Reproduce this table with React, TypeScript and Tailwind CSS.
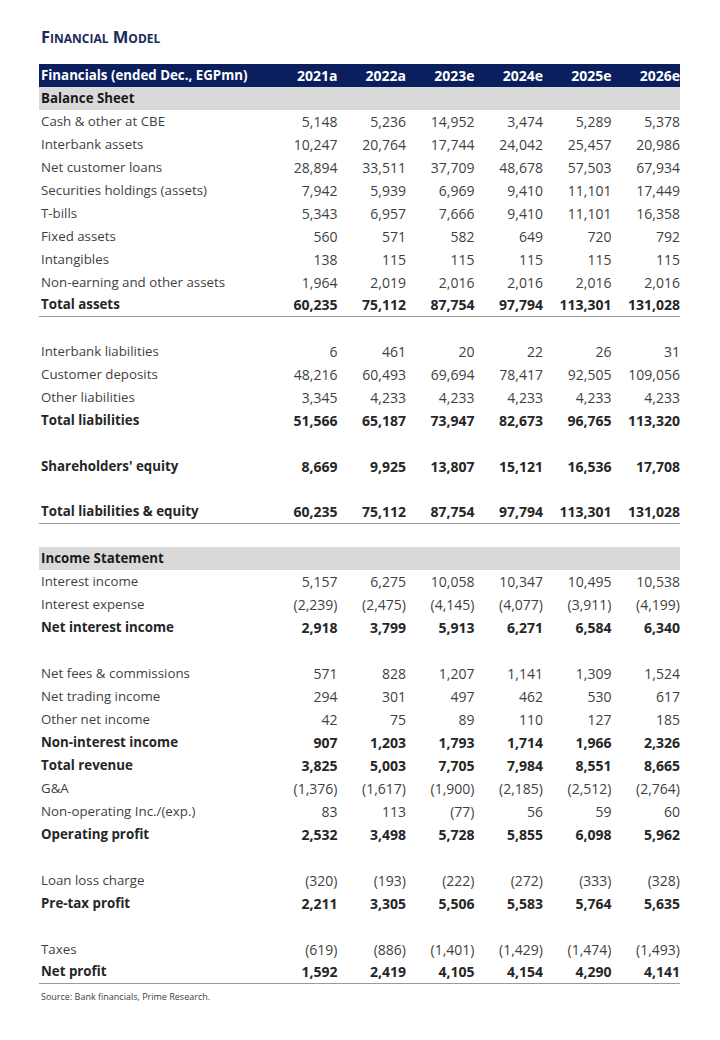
type Row =
  | { kind: 'section'; label: string }
  | { kind: 'blank' }
  | { kind: 'data'; label: string; values: string[]; bold?: boolean; line?: boolean }

const years = ['2021a', '2022a', '2023e', '2024e', '2025e', '2026e']

const rows: Row[] = [
  { kind: 'section', label: 'Balance Sheet' },
  { kind: 'data', label: 'Cash & other at CBE', values: ['5,148', '5,236', '14,952', '3,474', '5,289', '5,378'] },
  { kind: 'data', label: 'Interbank assets', values: ['10,247', '20,764', '17,744', '24,042', '25,457', '20,986'] },
  { kind: 'data', label: 'Net customer loans', values: ['28,894', '33,511', '37,709', '48,678', '57,503', '67,934'] },
  { kind: 'data', label: 'Securities holdings (assets)', values: ['7,942', '5,939', '6,969', '9,410', '11,101', '17,449'] },
  { kind: 'data', label: 'T-bills', values: ['5,343', '6,957', '7,666', '9,410', '11,101', '16,358'] },
  { kind: 'data', label: 'Fixed assets', values: ['560', '571', '582', '649', '720', '792'] },
  { kind: 'data', label: 'Intangibles', values: ['138', '115', '115', '115', '115', '115'] },
  { kind: 'data', label: 'Non-earning and other assets', values: ['1,964', '2,019', '2,016', '2,016', '2,016', '2,016'] },
  { kind: 'data', label: 'Total assets', values: ['60,235', '75,112', '87,754', '97,794', '113,301', '131,028'], bold: true, line: true },
  { kind: 'blank' },
  { kind: 'data', label: 'Interbank liabilities', values: ['6', '461', '20', '22', '26', '31'] },
  { kind: 'data', label: 'Customer deposits', values: ['48,216', '60,493', '69,694', '78,417', '92,505', '109,056'] },
  { kind: 'data', label: 'Other liabilities', values: ['3,345', '4,233', '4,233', '4,233', '4,233', '4,233'] },
  { kind: 'data', label: 'Total liabilities', values: ['51,566', '65,187', '73,947', '82,673', '96,765', '113,320'], bold: true },
  { kind: 'blank' },
  { kind: 'data', label: "Shareholders' equity", values: ['8,669', '9,925', '13,807', '15,121', '16,536', '17,708'], bold: true },
  { kind: 'blank' },
  { kind: 'data', label: 'Total liabilities & equity', values: ['60,235', '75,112', '87,754', '97,794', '113,301', '131,028'], bold: true, line: true },
  { kind: 'blank' },
  { kind: 'section', label: 'Income Statement' },
  { kind: 'data', label: 'Interest income', values: ['5,157', '6,275', '10,058', '10,347', '10,495', '10,538'] },
  { kind: 'data', label: 'Interest expense', values: ['(2,239)', '(2,475)', '(4,145)', '(4,077)', '(3,911)', '(4,199)'] },
  { kind: 'data', label: 'Net interest income', values: ['2,918', '3,799', '5,913', '6,271', '6,584', '6,340'], bold: true },
  { kind: 'blank' },
  { kind: 'data', label: 'Net fees & commissions', values: ['571', '828', '1,207', '1,141', '1,309', '1,524'] },
  { kind: 'data', label: 'Net trading income', values: ['294', '301', '497', '462', '530', '617'] },
  { kind: 'data', label: 'Other net income', values: ['42', '75', '89', '110', '127', '185'] },
  { kind: 'data', label: 'Non-interest income', values: ['907', '1,203', '1,793', '1,714', '1,966', '2,326'], bold: true },
  { kind: 'data', label: 'Total revenue', values: ['3,825', '5,003', '7,705', '7,984', '8,551', '8,665'], bold: true },
  { kind: 'data', label: 'G&A', values: ['(1,376)', '(1,617)', '(1,900)', '(2,185)', '(2,512)', '(2,764)'] },
  { kind: 'data', label: 'Non-operating Inc./(exp.)', values: ['83', '113', '(77)', '56', '59', '60'] },
  { kind: 'data', label: 'Operating profit', values: ['2,532', '3,498', '5,728', '5,855', '6,098', '5,962'], bold: true },
  { kind: 'blank' },
  { kind: 'data', label: 'Loan loss charge', values: ['(320)', '(193)', '(222)', '(272)', '(333)', '(328)'] },
  { kind: 'data', label: 'Pre-tax profit', values: ['2,211', '3,305', '5,506', '5,583', '5,764', '5,635'], bold: true },
  { kind: 'blank' },
  { kind: 'data', label: 'Taxes', values: ['(619)', '(886)', '(1,401)', '(1,429)', '(1,474)', '(1,493)'] },
  { kind: 'data', label: 'Net profit', values: ['1,592', '2,419', '4,105', '4,154', '4,290', '4,141'], bold: true, line: true },
]

const grid = 'grid grid-cols-[230px_repeat(6,68.5px)] items-center'

function TableRow({ row }: { row: Row }) {
  if (row.kind === 'blank') return <div className="h-[23px]" />
  if (row.kind === 'section') {
    return (
      <div className="h-[23px] bg-[#d9d9d9] pl-[2px] flex items-center font-bold text-[#1a1a1a]">
        {row.label}
      </div>
    )
  }
  return (
    <div
      className={`${grid} h-[23px] ${row.bold ? 'font-bold text-[#262626]' : 'text-[#3f3f3f]'} ${
        row.line ? 'border-b border-[#9a9a9a]' : ''
      }`}
    >
      <span className="pl-[2px]">{row.label}</span>
      {row.values.map((v, i) => (
        <span key={i} className="text-right text-[14px]">
          {v}
        </span>
      ))}
    </div>
  )
}

export default function App() {
  return (
    <div className="min-h-[1040px] bg-white px-[39px] pt-[29px] font-['Open_Sans','Noto_Sans',sans-serif] text-[13.3px] leading-none">
      <h1 className="text-[16.5px] font-bold text-[#1b2a5c] [font-variant-caps:small-caps] pl-[2px] h-[22px]">
        Financial Model
      </h1>
      <div className="w-[641px] mt-[13px]">
        <div className={`${grid} h-[23px] bg-[#0b1f5e] text-white font-bold`}>
          <span className="pl-[2px]">Financials (ended Dec., EGPmn)</span>
          {years.map((y) => (
            <span key={y} className="text-right text-[14px]">
              {y}
            </span>
          ))}
        </div>
        {rows.map((r, i) => (
          <TableRow key={i} row={r} />
        ))}
        <p className="mt-[8px] pl-[2px] text-[9px] text-[#404040]">Source: Bank financials, Prime Research.</p>
      </div>
    </div>
  )
}
